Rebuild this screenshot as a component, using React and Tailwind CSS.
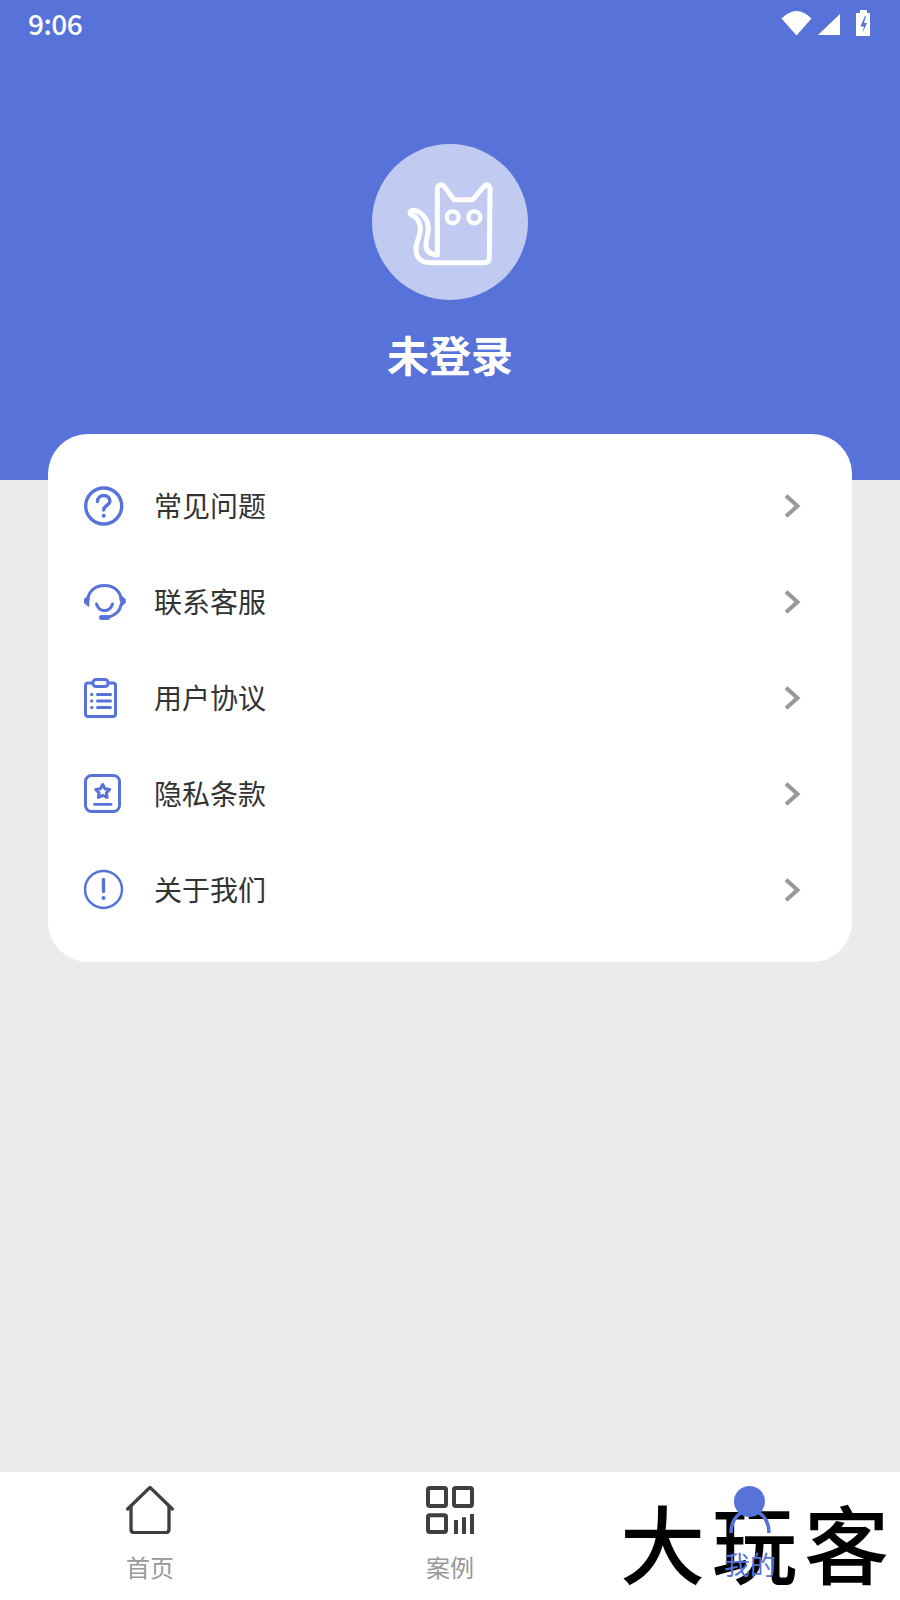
const BLUE = '#5773d9';

function QuestionIcon() {
  return (
    <svg width="48" height="48" viewBox="0 0 48 48" fill="none" stroke={BLUE} strokeLinecap="round" strokeLinejoin="round">
      <circle cx="19.7" cy="24" r="18" strokeWidth="3.4" />
      <path d="M13.500 19.500c0-3.600 2.800-6 6.200-6s6.200 2.400 6.200 5.600c0 4.400-6.200 4.400-6.200 9" strokeWidth="3.400" />
      <circle cx="19.7" cy="33.800" r="2" fill={BLUE} stroke="none" />
    </svg>
  );
}

function HeadsetIcon() {
  return (
    <svg width="48" height="48" viewBox="0 0 48 48" fill="none" stroke={BLUE} strokeLinecap="round" strokeLinejoin="round">
      <path d="M4 22C4 13.500 11 7.500 20.500 7.500S37 13.500 37 22" strokeWidth="3" />
      <path d="M37 27c-1 6.500-5.500 10-12 12" strokeWidth="3" />
      <path d="M12.500 26c1.500 4.500 4.500 6.600 8 6.600s6.500-2.100 8-6.600" strokeWidth="3" />
      <path d="M4.500 18L0.500 21.500v3L4.500 28z" fill={BLUE} strokeWidth="1.500" />
      <path d="M37 18l4 3.500v3L37 28z" fill={BLUE} strokeWidth="1.500" />
      <rect x="15" y="37" width="11" height="5" rx="2.500" fill={BLUE} stroke="none" />
    </svg>
  );
}

function ClipboardIcon() {
  return (
    <svg width="48" height="48" viewBox="0 0 48 48" fill="none" stroke={BLUE} strokeLinecap="round" strokeLinejoin="round">
      <path d="M8 9H4a2.500 2.500 0 0 0-2.500 2.500v28.500A2.500 2.500 0 0 0 4 42.500h25a2.500 2.500 0 0 0 2.500-2.500V11.500A2.500 2.500 0 0 0 29 9h-4" strokeWidth="3" />
      <rect x="9" y="5.500" width="15" height="7" rx="3" strokeWidth="3" />
      <path d="M13.500 20.500h13M13.500 27h13M13.500 33.500h13" strokeWidth="3" />
      <path d="M7.500 20.500h.5M7.500 27h.5M7.500 33.500h.5" strokeWidth="3" />
    </svg>
  );
}

function StarDocIcon() {
  return (
    <svg width="48" height="48" viewBox="0 0 48 48" fill="none" stroke={BLUE} strokeLinecap="round" strokeLinejoin="round">
      <rect x="1.500" y="5.500" width="34" height="36" rx="6" strokeWidth="3" />
      <path d="M18.700 14.500l2.300 4.300 4.700.7-3.400 3.300.8 4.700-4.400-2.200-4.400 2.200.8-4.700-3.400-3.300 4.700-.7z" strokeWidth="3" />
      <path d="M10.500 34.300h16.500" strokeWidth="2.800" />
    </svg>
  );
}

function InfoIcon() {
  return (
    <svg width="48" height="48" viewBox="0 0 48 48" fill="none" stroke={BLUE} strokeLinecap="round">
      <circle cx="19.500" cy="23.400" r="18.500" strokeWidth="2.500" />
      <path d="M19.500 13.500v12" strokeWidth="3.400" />
      <circle cx="19.500" cy="32" r="2" fill={BLUE} stroke="none" />
    </svg>
  );
}

function CatLogo() {
  return (
    <svg width="156" height="156" viewBox="66 42 468 468" fill="none" stroke="#ffffff" strokeLinecap="round" strokeLinejoin="round">
      <path
        d="M262 375V178c0-12 12-18 20-9l30 40h56l34-40c8-9 18-3 18 9l-2 205c0 10-6 15-15 15H240c-26 0-42-14-42-40 0-22 13-40 13-62 0-20-12-36-27-42-9-5-1-16 11-12 24 6 40 28 40 54 0 14-7 34-7 50 0 20 14 27 34 29"
        strokeWidth="15"
      />
      <circle cx="308" cy="262" r="18" strokeWidth="13" />
      <circle cx="373" cy="262" r="18" strokeWidth="13" />
    </svg>
  );
}

function StatusIcons() {
  return (
    <div className="flex items-start">
      <svg width="31" height="25" viewBox="0 0 31 25" className="mt-[11px]" fill="#ffffff">
        <path d="M0.500 7.500Q15.500 -7.500 30.500 7.500L15.500 24.500z" />
      </svg>
      <svg width="22" height="21" viewBox="0 0 22 21" className="mt-[14px] ml-[6px]" fill="#ffffff">
        <path d="M22 0v21H0z" />
      </svg>
      <svg width="14" height="26" viewBox="0 0 14 26" className="mt-[10px] ml-[16px]">
        <path fill="#ffffff" d="M4 0h7v3h3v23H0V3h4z" />
        <path fill={BLUE} d="M9 6L4.500 16.500H8L6.500 23 11 13H8l2-7z" />
      </svg>
    </div>
  );
}

const menuItems = [
  { label: '常见问题', Icon: QuestionIcon },
  { label: '联系客服', Icon: HeadsetIcon },
  { label: '用户协议', Icon: ClipboardIcon },
  { label: '隐私条款', Icon: StarDocIcon },
  { label: '关于我们', Icon: InfoIcon },
];

function MenuRow({ label, Icon }) {
  return (
    <div className="flex items-center h-[96px] pl-[36px] pr-[50px]">
      <div className="w-[48px] h-[48px] shrink-0">
        <Icon />
      </div>
      <span className="ml-[22px] flex-1 pb-[2px] text-[28px] leading-none text-[#333333]">{label}</span>
      <svg width="18" height="26" viewBox="0 0 18 26" fill="none" stroke="#999999" strokeWidth="4" strokeLinecap="square" strokeLinejoin="miter">
        <path d="M3.500 4l10 9-10 9" />
      </svg>
    </div>
  );
}

function BottomNav() {
  return (
    <nav className="relative h-[128px] bg-white grid grid-cols-3 shrink-0">
      <div className="flex flex-col items-center pt-[14px]">
        <svg width="48" height="48" viewBox="78 78 144 144" fill="none" stroke="#3f3f3f" strokeWidth="10" strokeLinecap="round" strokeLinejoin="round">
          <path d="M83 147l67-65 67 65" />
          <path d="M93 138v70c0 7 4 10 10 10h94c6 0 10-3 10-10v-70" />
        </svg>
        <span className="mt-[18px] text-[24px] leading-[30px] text-[#999999]">首页</span>
      </div>
      <div className="flex flex-col items-center pt-[14px]">
        <svg width="48" height="48" viewBox="978 78 144 144" fill="none" stroke="#3f3f3f" strokeWidth="12" strokeLinejoin="round">
          <rect x="984" y="84" width="54" height="54" rx="5" />
          <rect x="1062" y="84" width="54" height="54" rx="5" />
          <rect x="984" y="166" width="54" height="50" rx="5" />
          <path d="M1068 180v42M1092 172v50M1116 162v60" />
        </svg>
        <span className="mt-[18px] text-[24px] leading-[30px] text-[#999999]">案例</span>
      </div>
      <div className="relative z-10 flex flex-col items-center pt-[14px]">
        <svg width="48" height="48" viewBox="0 0 48 48" fill="none">
          <circle cx="23.500" cy="15.500" r="15.500" fill={BLUE} />
          <path d="M5 47C5 17 43 17 43 47" stroke={BLUE} strokeWidth="3.500" />
        </svg>
        <span className="mt-[14px] text-[26px] leading-[32px] text-[#5773d9]">我的</span>
      </div>
      {/* watermark sits across the last tab */}
      <div className="absolute left-[620px] top-[21px] text-[85px] leading-[95px] tracking-[7px] font-medium text-black whitespace-nowrap pointer-events-none">
        大玩客
      </div>
    </nav>
  );
}

export default function App() {
  return (
    <div
      className="w-[900px] h-[1600px] flex flex-col bg-[#ebebeb] overflow-hidden"
      style={{ fontFamily: '"Noto Sans CJK SC", "Noto Sans", sans-serif' }}
    >
      <header className="h-[480px] shrink-0 bg-[#5773d9] flex flex-col">
        <div className="h-[48px] flex justify-between pl-[28px] pr-[30px] text-white">
          <span className="text-[28px] leading-[46px] font-medium tracking-[-0.5px]">9:06</span>
          <StatusIcons />
        </div>
        <div className="mt-[96px] flex flex-col items-center">
          <div className="w-[156px] h-[156px] rounded-full bg-[#c1cbf1]">
            <CatLogo />
          </div>
          <h1 className="mt-[29px] text-[42px] leading-[50px] font-bold text-white">未登录</h1>
        </div>
      </header>

      <main className="flex-1 px-[48px]">
        <div className="-mt-[46px] bg-white rounded-[40px] py-[24px]">
          {menuItems.map((item) => (
            <MenuRow key={item.label} {...item} />
          ))}
        </div>
      </main>

      <BottomNav />
    </div>
  );
}
